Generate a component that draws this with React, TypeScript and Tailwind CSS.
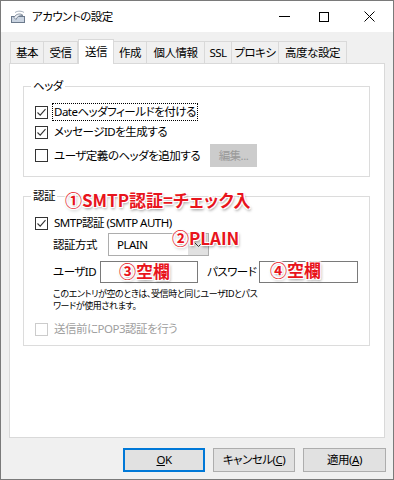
import React from 'react';

const font = '[font-family:"Noto_Sans","Noto_Sans_CJK_JP",sans-serif]';
const note =
  'pointer-events-none absolute whitespace-nowrap text-[17px] font-bold leading-none tracking-normal text-[#e8141c] [font-family:"Noto_Sans_CJK_JP",sans-serif] [text-shadow:-1px_-1px_0_#fff,1px_-1px_0_#fff,-1px_1px_0_#fff,1px_1px_0_#fff,0_0_2px_#fff,1px_2px_3px_rgba(0,0,0,0.45)]';

function CheckBox({ checked, disabled }: { checked?: boolean; disabled?: boolean }) {
  return (
    <span
      className={`flex h-[13px] w-[13px] shrink-0 items-center justify-center border bg-white ${
        disabled ? 'border-[#cccccc]' : 'border-[#333333]'
      }`}
    >
      {checked && (
        <svg width="11" height="11" viewBox="0 0 11 11">
          <path d="M1.5 5.5 L4.2 8.2 L9.5 2.2" fill="none" stroke="#333" strokeWidth="1.1" />
        </svg>
      )}
    </span>
  );
}

function Row({ checked, disabled, children, focus }: { checked?: boolean; disabled?: boolean; children: React.ReactNode; focus?: boolean }) {
  return (
    <div className="flex h-[20px] items-center gap-[4px]">
      <CheckBox checked={checked} disabled={disabled} />
      <span
        className={`whitespace-nowrap px-[1px] leading-[16px] ${disabled ? 'text-[#a0a0a0]' : 'text-black'} ${
          focus ? 'border border-dotted border-black' : 'border border-transparent'
        }`}
      >
        {children}
      </span>
    </div>
  );
}

function GroupBox({ label, className, children }: { label: string; className: string; children: React.ReactNode }) {
  return (
    <div className={`relative border border-[#dcdcdc] ${className}`}>
      <span className="absolute left-[7px] top-[-8px] bg-white px-[2px] leading-[14px]">{label}</span>
      {children}
    </div>
  );
}

const tabs = [
  { label: '基本', w: 'w-[34px]' },
  { label: '受信', w: 'w-[34px]' },
  { label: '送信', w: 'w-[36px]', active: true },
  { label: '作成', w: 'w-[33px]' },
  { label: '個人情報', w: 'w-[58px]' },
  { label: 'SSL', w: 'w-[27px]' },
  { label: 'プロキシ', w: 'w-[47px]' },
  { label: '高度な設定', w: 'w-[68px]' },
];

export default function App() {
  return (
    <div className={`flex h-[480px] w-[394px] flex-col overflow-hidden border border-[#7a7a7a] bg-[#f0f0f0] text-[11.5px] tracking-[-0.5px] text-black ${font} [font-feature-settings:"palt"]`}>
      {/* title bar */}
      <div className="flex h-[31px] shrink-0 items-center bg-white">
        <svg className="ml-[9px]" width="17" height="14" viewBox="0 0 17 14">
          <rect x="1.5" y="6.5" width="13" height="6" fill="#c9d3e0" stroke="#6c7a8c" />
          <path d="M4 7.5 C6 3.5 11 3 13 5.5 C10 5 7 6.5 6 9.5 Z" fill="#eef2f7" stroke="#6c7a8c" strokeWidth="0.8" />
          <path d="M5 2.5 C8 0.5 12 1 14 2.5" fill="none" stroke="#8d9aab" strokeWidth="0.8" />
        </svg>
        <span className="ml-[5px] leading-none">アカウントの設定</span>
        <div className="ml-auto flex h-full items-center">
          <span className="mr-[29px] h-px w-[11px] bg-black" />
          <span className="mr-[35px] h-[10px] w-[10px] border border-black" />
          <svg className="mr-[18px]" width="11" height="11" viewBox="0 0 11 11">
            <path d="M0.5 0.5 L10.5 10.5 M10.5 0.5 L0.5 10.5" stroke="#000" strokeWidth="1" />
          </svg>
        </div>
      </div>

      {/* body */}
      <div className="flex flex-1 flex-col px-[8px] pt-[7px]">
        <div className="flex h-[24px] items-end pl-[1px]">
          {tabs.map((t) => (
            <div
              key={t.label}
              className={`${t.w} flex shrink-0 items-center justify-center border-t border-[#d9d9d9] ${
                t.active
                  ? 'relative z-10 -mb-px h-[25px] border-x bg-white'
                  : 'h-[22px] border-r bg-[#f0f0f0] first:border-l'
              }`}
            >
              <span className="leading-none">{t.label}</span>
            </div>
          ))}
        </div>

        <div className="relative flex h-[375px] flex-col border border-[#d9d9d9] bg-white pl-[13px] pr-[14px] pt-[22px]">
          <GroupBox label="ヘッダ" className="h-[91px] px-[11px] pt-[15px]">
            <Row checked focus>Dateヘッダフィールドを付ける</Row>
            <Row checked>メッセージIDを生成する</Row>
            <div className="mt-[2px] flex h-[23px] items-center">
              <div className="w-[175px]">
                <Row>ユーザ定義のヘッダを追加する</Row>
              </div>
              <button className="h-[23px] w-[47px] border border-[#cccccc] bg-[#cccccc] text-[#9a9a9a]">編集...</button>
            </div>
          </GroupBox>

          <GroupBox label="認証" className="mt-[19px] h-[150px] px-[11px] pt-[16px]">
            <Row checked>SMTP認証 (SMTP AUTH)</Row>
            <div className="ml-[18px] flex h-[23px] items-center">
              <span className="w-[55px] whitespace-nowrap">認証方式</span>
              <div className="flex h-[23px] w-[101px] items-center border border-[#adadad] bg-white">
                <span className="flex-1 pl-[8px]">PLAIN</span>
                <span className="flex h-full w-[20px] items-center justify-center bg-[#e1e1e1]">
                  <svg width="9" height="6" viewBox="0 0 9 6">
                    <path d="M0.5 0.5 L4.5 4.5 L8.5 0.5" fill="none" stroke="#333" />
                  </svg>
                </span>
              </div>
            </div>
            <div className="ml-[18px] mt-[5px] flex h-[22px] items-center">
              <span className="w-[47px] whitespace-nowrap">ユーザID</span>
              <span className="h-[22px] w-[99px] border border-[#7a7a7a] bg-white" />
              <span className="ml-[9px] w-[52px] whitespace-nowrap">パスワード</span>
              <span className="h-[22px] w-[100px] border border-[#7a7a7a] bg-white" />
            </div>
            <p className="ml-[18px] mt-[5px] whitespace-nowrap text-[9px] leading-[12px] tracking-[-0.4px]">
              このエントリが空のときは、受信時と同じユーザIDとパス
              <br />
              ワードが使用されます。
            </p>
            <div className="mt-[7px]">
              <Row disabled>送信前にPOP3認証を行う</Row>
            </div>
          </GroupBox>

          <span className={`${note} left-[55px] top-[127px]`}>①SMTP認証=チェック入</span>
          <span className={`${note} left-[162px] top-[165px]`}>②PLAIN</span>
          <span className={`${note} left-[109px] top-[198px]`}>③空欄</span>
          <span className={`${note} left-[260px] top-[197px]`}>④空欄</span>
        </div>

        <div className="mt-[10px] flex justify-end gap-[8px]">
          <button className="h-[24px] w-[82px] border-2 border-[#0078d7] bg-[#e1e1e1]">
            <span className="underline">O</span>K
          </button>
          <button className="h-[24px] w-[82px] border border-[#adadad] bg-[#e1e1e1]">
            キャンセル(<span className="underline">C</span>)
          </button>
          <button className="mr-[-1px] h-[24px] w-[83px] border border-[#adadad] bg-[#e1e1e1]">
            適用(<span className="underline">A</span>)
          </button>
        </div>
      </div>
    </div>
  );
}
